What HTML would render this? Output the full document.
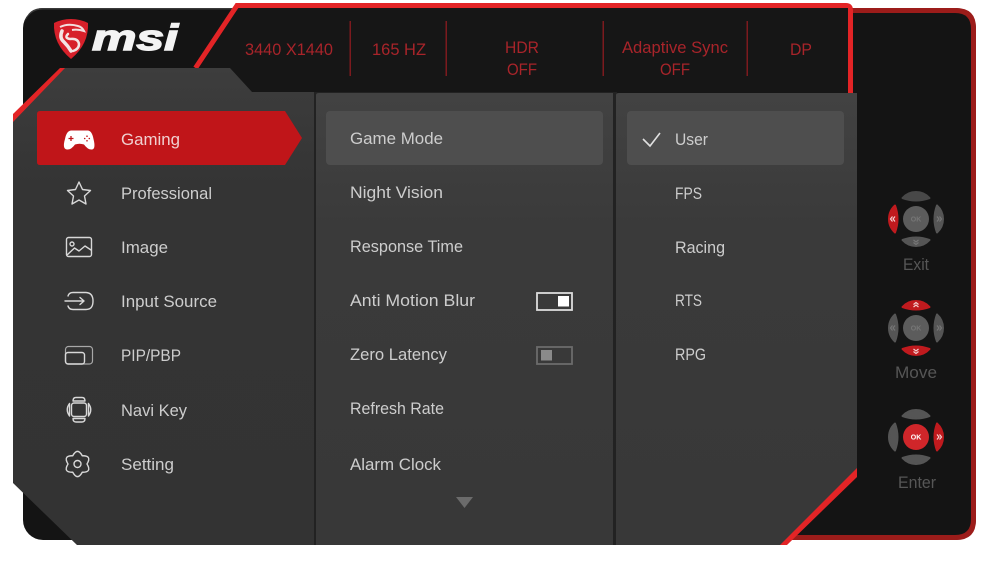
<!DOCTYPE html>
<html>
<head>
<meta charset="utf-8">
<title>MSI OSD</title>
<style>
html,body{margin:0;padding:0;background:#fff;width:985px;height:561px;overflow:hidden}
svg{display:block}
text{font-family:"Liberation Sans",sans-serif}
.m{font-size:17px;fill:#cdcdcd}
.h{font-size:17px;fill:#a8242a}
.n{font-size:17px;fill:#565656}
.i{fill:none;stroke:#d8d8d8;stroke-width:1.4;stroke-linejoin:round;stroke-linecap:round}
</style>
</head>
<body>
<svg width="985" height="561" viewBox="0 0 985 561" xmlns="http://www.w3.org/2000/svg">
<defs>
<linearGradient id="p1" x1="0" y1="0" x2="0" y2="1"><stop offset="0" stop-color="#3d3d3d"/><stop offset=".25" stop-color="#343434"/><stop offset="1" stop-color="#333"/></linearGradient>
<linearGradient id="p2" x1="0" y1="0" x2="0" y2="1"><stop offset="0" stop-color="#424242"/><stop offset=".3" stop-color="#3a3a3a"/><stop offset="1" stop-color="#383838"/></linearGradient>
<path id="pad" d="M-13.500,-21 Q-8,-27 0,-27 Q8,-27 13.500,-21 Q0,-16 -13.500,-21 Z" stroke-width="2" stroke-linejoin="round"/>
<path id="chev" d="M-2.500,0.500 L0,-1.500 L2.500,0.500 M-2.500,3 L0,1 L2.500,3" fill="none" stroke-width="1.200"/>
</defs>

<!-- base -->
<rect x="23" y="8" width="953" height="532" rx="20" fill="#141414"/>
<path d="M853,8 H956 Q976,8 976,28 V520 Q976,540 956,540 H780 V535 H955 Q971,535 971,519 V29 Q971,13 955,13 H853 Z" fill="#9c1c1a"/>
<path d="M43,8 H240 V9.500 H43 Q30,9.500 25,22 Q28,8 43,8Z" fill="#3a3a3a"/>

<!-- header red outline -->
<path d="M195.500,68 L237,5.500 H846 Q850.500,5.500 850.500,10 V94" fill="none" stroke="#e32426" stroke-width="5"/>
<path d="M199,68 L238.500,8 H848 V93 H252 L230,68 Z" fill="#161616"/>

<!-- header text -->
<g>
<text class="h" x="245" y="55" textLength="88" lengthAdjust="spacingAndGlyphs">3440 X1440</text>
<text class="h" x="372" y="55" textLength="54" lengthAdjust="spacingAndGlyphs">165 HZ</text>
<text class="h" x="505" y="53" textLength="34" lengthAdjust="spacingAndGlyphs">HDR</text>
<text class="h" x="507" y="75" textLength="30" lengthAdjust="spacingAndGlyphs">OFF</text>
<text class="h" x="622" y="53" textLength="106" lengthAdjust="spacingAndGlyphs">Adaptive Sync</text>
<text class="h" x="660" y="75" textLength="30" lengthAdjust="spacingAndGlyphs">OFF</text>
<text class="h" x="790" y="55" textLength="22" lengthAdjust="spacingAndGlyphs">DP</text>
</g>
<g fill="#7c1a1e">
<rect x="349.500" y="21" width="1.500" height="55"/>
<rect x="445.500" y="21" width="1.500" height="55"/>
<rect x="602.500" y="21" width="1.500" height="55"/>
<rect x="746.500" y="21" width="1.500" height="55"/>
</g>

<!-- bottom-right red strip -->
<path d="M857,466 V477 L787,545 H778 Z" fill="#e32426"/>
<!-- left red strip -->
<path d="M13,114 L60,68 H66 L13,123 Z" fill="#e32426"/>

<!-- panels -->
<path d="M13,122 L65,68 H230 L252,92 H314 V545 H77 L13,483 Z" fill="url(#p1)"/>
<rect x="314" y="92" width="303" height="453" fill="#222"/>
<path d="M316,95 Q316,93 319,93 H613 V545 H316 Z" fill="url(#p2)"/>
<path d="M616,95 Q616,93 619,93 H857 V468 L780,545 H616 Z" fill="url(#p2)"/>

<!-- selection -->
<path d="M40,111 H285 L302,138 L285,165 H40 Q37,165 37,162 V114 Q37,111 40,111 Z" fill="#c01519"/>
<rect x="326" y="111" width="277" height="54" rx="4" fill="#4e4e4e"/>
<rect x="627" y="111" width="217" height="54" rx="4" fill="#4e4e4e"/>

<!-- logo -->
<path d="M71,19 Q80,19 88,23 Q89,44 71,59 Q53,44 54,23 Q62,19 71,19 Z" fill="#d7202a"/>
<path d="M60,27 Q68,23 78,26 Q82,27 84,31 Q78,29 72,30" fill="none" stroke="#f3dede" stroke-width="2"/>
<path d="M62,31 Q59,38 64,42 Q68,46 71,51" fill="none" stroke="#f3e4e4" stroke-width="3.500" stroke-linecap="round"/>
<path d="M68,34 Q64,38 70,39 Q78,38 79,44 Q79,49 73,51" fill="none" stroke="#f3e4e4" stroke-width="2.500" stroke-linecap="round"/>
<text x="92" y="50" font-size="36" font-weight="700" font-style="italic" fill="#f4f4f4" stroke="#f4f4f4" stroke-width="1.400" textLength="86" lengthAdjust="spacingAndGlyphs">msi</text>

<!-- left menu text -->
<text x="121" y="145" font-size="17" fill="#f0d0d0" textLength="59" lengthAdjust="spacingAndGlyphs">Gaming</text>
<text class="m" x="121" y="199" textLength="91" lengthAdjust="spacingAndGlyphs">Professional</text>
<text class="m" x="121" y="253" textLength="47" lengthAdjust="spacingAndGlyphs">Image</text>
<text class="m" x="121" y="307" textLength="96" lengthAdjust="spacingAndGlyphs">Input Source</text>
<text class="m" x="121" y="361" textLength="60" lengthAdjust="spacingAndGlyphs">PIP/PBP</text>
<text class="m" x="121" y="416" textLength="66" lengthAdjust="spacingAndGlyphs">Navi Key</text>
<text class="m" x="121" y="470" textLength="53" lengthAdjust="spacingAndGlyphs">Setting</text>

<!-- mid menu text -->
<text class="m" x="350" y="144" textLength="93" lengthAdjust="spacingAndGlyphs">Game Mode</text>
<text class="m" x="350" y="198" textLength="93" lengthAdjust="spacingAndGlyphs">Night Vision</text>
<text class="m" x="350" y="252" textLength="113" lengthAdjust="spacingAndGlyphs">Response Time</text>
<text class="m" x="350" y="306" textLength="125" lengthAdjust="spacingAndGlyphs">Anti Motion Blur</text>
<text class="m" x="350" y="360" textLength="97" lengthAdjust="spacingAndGlyphs">Zero Latency</text>
<text class="m" x="350" y="414" textLength="94" lengthAdjust="spacingAndGlyphs">Refresh Rate</text>
<text class="m" x="350" y="470" textLength="91" lengthAdjust="spacingAndGlyphs">Alarm Clock</text>

<!-- right menu text -->
<text class="m" x="675" y="145" textLength="33" lengthAdjust="spacingAndGlyphs">User</text>
<text class="m" x="675" y="199" textLength="27" lengthAdjust="spacingAndGlyphs">FPS</text>
<text class="m" x="675" y="253" textLength="50" lengthAdjust="spacingAndGlyphs">Racing</text>
<text class="m" x="675" y="306" textLength="27" lengthAdjust="spacingAndGlyphs">RTS</text>
<text class="m" x="675" y="360" textLength="31" lengthAdjust="spacingAndGlyphs">RPG</text>

<!-- check -->
<path d="M643,139 L650,146 L660,133" fill="none" stroke="#e0e0e0" stroke-width="1.600"/>

<!-- toggles -->
<rect x="537" y="293" width="35" height="17" fill="none" stroke="#dcdcdc" stroke-width="1.800"/>
<rect x="558" y="296" width="11" height="10.500" fill="#fff"/>
<rect x="537" y="347" width="35" height="17" fill="none" stroke="#6c6c6c" stroke-width="1.800"/>
<rect x="541" y="350" width="11" height="10.500" fill="#8a8a8a"/>

<!-- down arrow -->
<path d="M456,497 H473 L464.500,508 Z" fill="#6b6b6b"/>

<!-- gamepad -->
<path d="M71,130.500 H88 Q92,131 93.500,139 Q96,149 92,149.500 Q88,150 84,144.500 Q79.500,143 75,144.500 Q71,150 67,149.500 Q62,149 65,139 Q66.500,131 71,130.500 Z" fill="#fff"/>
<path d="M71,136 V141 M68.500,138.500 H73.500" stroke="#c01519" stroke-width="1.300" fill="none"/>
<g fill="#c01519"><circle cx="87" cy="136.200" r=".8"/><circle cx="87" cy="140.800" r=".8"/><circle cx="84.700" cy="138.500" r=".8"/><circle cx="89.300" cy="138.500" r=".8"/></g>

<!-- star -->
<path class="i" d="M79,182 L82.500,189.500 L90.500,190.500 L84.500,196 L86,204 L79,200 L72,204 L73.500,196 L67.500,190.500 L75.500,189.500 Z"/>

<!-- image -->
<rect class="i" x="66.500" y="237.500" width="25" height="19" rx="2"/>
<circle class="i" cx="72" cy="244" r="2"/>
<path class="i" d="M67,255 L74.500,248 L79,251 L85,246 L91,250"/>

<!-- input -->
<path class="i" d="M68,296 Q69,292.500 73,292.500 H86 Q93,293 93,301 Q93,309.500 86,309.500 H73 Q69,309.500 68,306"/>
<path class="i" d="M65,301 H84 M80,297.500 L84,301 L80,304.500"/>

<!-- pip -->
<rect x="65.500" y="346.500" width="27" height="17.500" rx="3" fill="none" stroke="#a8a8a8" stroke-width="1.200"/>
<rect class="i" x="65.500" y="352.500" width="19" height="11.500" rx="2.500"/>

<!-- navi -->
<rect class="i" x="71.500" y="403" width="15" height="13.500" rx="2.500"/>
<path class="i" d="M73,401 Q73,397.500 76,397.500 H82 Q85,397.500 85,401 Z"/>
<path class="i" d="M73,418.500 Q73,422 76,422 H82 Q85,422 85,418.500 Z"/>
<path class="i" d="M69.500,403.500 Q65,409.500 69.500,416 Z"/>
<path class="i" d="M88.500,403.500 Q93,409.500 88.500,416 Z"/>

<!-- gear -->
<path class="i" d="M72.750,455.770 Q77.500,447 82.250,455.770 Q92.200,455.500 87,464 Q92.200,472.500 82.250,472.230 Q77.500,481 72.750,472.230 Q62.800,472.500 68,464 Q62.800,455.500 72.750,455.770 Z"/>
<circle class="i" cx="77.500" cy="464" r="3.500"/>

<!-- Exit control -->
<g transform="translate(916,219)">
<circle r="13" fill="#5c5c5c"/>
<use href="#pad" fill="#484848" stroke="#484848"/>
<use href="#pad" fill="#c01a1e" stroke="#c01a1e" transform="rotate(-90)"/>
<use href="#pad" fill="#555" stroke="#555" transform="rotate(90)"/>
<use href="#pad" fill="#555" stroke="#555" transform="rotate(180)"/>
<use href="#chev" stroke="#f3d0d0" transform="rotate(-90) translate(0,-24)"/>
<use href="#chev" stroke="#777" transform="rotate(90) translate(0,-24)"/>
<use href="#chev" stroke="#777" transform="rotate(180) translate(0,-24)"/>
<text x="0" y="2.500" font-size="7" font-weight="700" fill="#777" text-anchor="middle">OK</text>
</g>
<text class="n" x="903" y="270" textLength="26" lengthAdjust="spacingAndGlyphs">Exit</text>

<!-- Move control -->
<g transform="translate(916,328)">
<circle r="13" fill="#5c5c5c"/>
<use href="#pad" fill="#c01a1e" stroke="#c01a1e"/>
<use href="#pad" fill="#555" stroke="#555" transform="rotate(-90)"/>
<use href="#pad" fill="#555" stroke="#555" transform="rotate(90)"/>
<use href="#pad" fill="#c01a1e" stroke="#c01a1e" transform="rotate(180)"/>
<use href="#chev" stroke="#f3d0d0" transform="translate(0,-24)"/>
<use href="#chev" stroke="#f3d0d0" transform="rotate(180) translate(0,-24)"/>
<use href="#chev" stroke="#777" transform="rotate(-90) translate(0,-24)"/>
<use href="#chev" stroke="#777" transform="rotate(90) translate(0,-24)"/>
<text x="0" y="2.500" font-size="7" font-weight="700" fill="#777" text-anchor="middle">OK</text>
</g>
<text class="n" x="895" y="378" textLength="42" lengthAdjust="spacingAndGlyphs">Move</text>

<!-- Enter control -->
<g transform="translate(916,437)">
<circle r="13" fill="#d0262a"/>
<use href="#pad" fill="#555" stroke="#555"/>
<use href="#pad" fill="#555" stroke="#555" transform="rotate(-90)"/>
<use href="#pad" fill="#c01a1e" stroke="#c01a1e" transform="rotate(90)"/>
<use href="#pad" fill="#555" stroke="#555" transform="rotate(180)"/>
<use href="#chev" stroke="#f3d0d0" transform="rotate(90) translate(0,-24)"/>
<text x="0" y="2.500" font-size="7" font-weight="700" fill="#fff" text-anchor="middle">OK</text>
</g>
<text class="n" x="898" y="488" textLength="38" lengthAdjust="spacingAndGlyphs">Enter</text>
</svg>
</body>
</html>
